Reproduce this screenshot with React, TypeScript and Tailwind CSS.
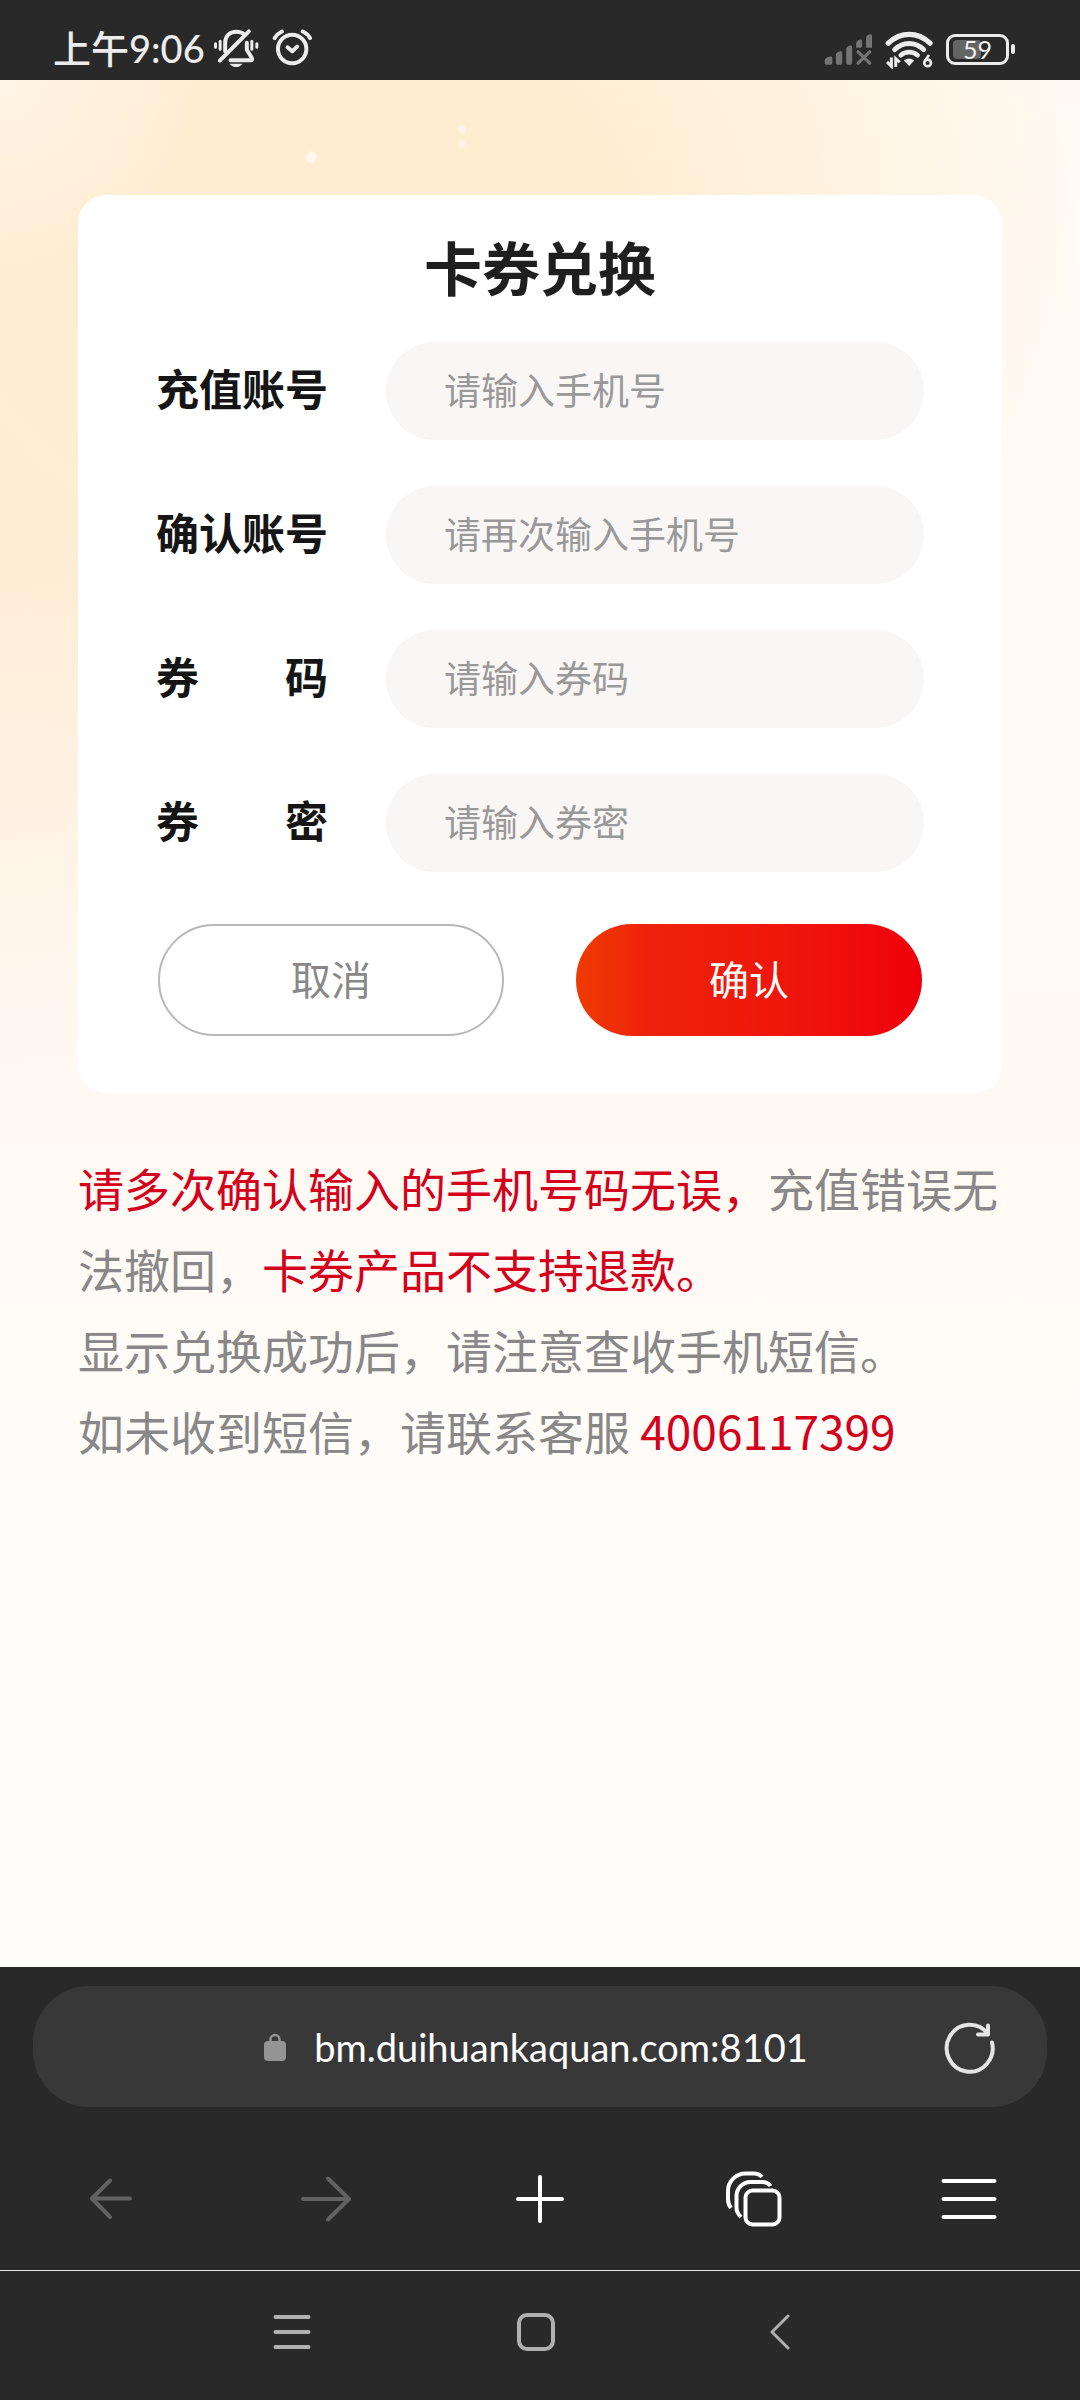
import type { ReactNode } from 'react';

const fields = [
  { id: 'account', label: '充值账号', placeholder: '请输入手机号' },
  { id: 'account-confirm', label: '确认账号', placeholder: '请再次输入手机号' },
  { id: 'code', label: '券 码', placeholder: '请输入券码' },
  { id: 'secret', label: '券 密', placeholder: '请输入券密' },
];

function BellOffIcon() {
  return (
    <svg viewBox="552 88 140 120" className="h-10 w-[47px]" fill="none" stroke="#ececec" strokeWidth="12" strokeLinecap="round" aria-label="静音">
      <path d="M588 158V132C588 112 602 99 621 99C632 99 640 102 646 108" />
      <path d="M572 186L659 98" />
      <path d="M653 132V153L668 178Q671 185 664 185H604" strokeLinejoin="round" />
      <path d="M573 128V152M668 128V152M559 135V146M683 135V146" strokeWidth="9" />
      <path d="M601 195H640Q632 205 621 205Q609 205 601 195Z" fill="#ececec" stroke="none" />
    </svg>
  );
}

function AlarmIcon() {
  return (
    <svg viewBox="729 88 124 120" className="h-10 w-[41px]" fill="none" stroke="#ececec" strokeWidth="12" strokeLinecap="round" strokeLinejoin="round" aria-label="闹钟">
      <circle cx="790" cy="151" r="43" />
      <path d="M776 146L790 158L805 144" />
      <path d="M737 118Q746 104 759 98M844 118Q836 104 822 98" />
    </svg>
  );
}

function SignalIcon() {
  return (
    <svg viewBox="100 100 148 98" className="h-[33px] w-[49px]" fill="#747474" aria-label="无信号">
      <path d="M102 190V182Q103 173 120 170Q125 169 125 175V190Q125 195 120 195H107Q102 195 102 190Z" />
      <path d="M136 190V163Q137 157 150 154Q155 153 155 159V190Q155 195 150 195H141Q136 195 136 190Z" />
      <path d="M167 190V147Q168 140 180 137Q185 136 185 142V190Q185 195 180 195H172Q167 195 167 190Z" />
      <path d="M197 144V130Q198 122 210 119Q215 118 215 124V138Q215 144 210 144Z" />
      <path d="M227 144V113Q228 106 240 103Q245 102 245 108V144Z" />
      <path d="M203 156L238 190M238 156L203 190" stroke="#747474" strokeWidth="10" strokeLinecap="round" />
    </svg>
  );
}

function WifiIcon() {
  return (
    <svg viewBox="282 92 146 116" className="h-[39px] w-[49px]" fill="none" stroke="#ececec" aria-label="无线网络">
      <path d="M292 131Q320 105 354 105Q388 105 416 131" strokeWidth="16" strokeLinecap="round" />
      <path d="M311 150Q330 132 354 132Q378 132 397 150" strokeWidth="15" strokeLinecap="round" />
      <path d="M329 167Q340 158 354 158Q368 158 379 167" strokeWidth="14" strokeLinecap="round" />
      <path d="M338 183Q354 171 369 183L354 199Z" fill="#ececec" stroke="none" />
      <path d="M301 174V200L288 187M314 202V177L326 188" strokeWidth="9" />
      <path d="M413 166L401 184" strokeWidth="8" />
      <circle cx="409" cy="190" r="10" strokeWidth="8" />
    </svg>
  );
}

function Battery() {
  return (
    <div className="flex items-center gap-0.5">
      <div className="relative flex h-[31px] w-[63px] items-center justify-center rounded-[9px] border-3 border-[#ececec] text-[25px] leading-none text-[#f2f2f2]">
        <span className="absolute inset-y-[3px] left-1 w-7 rounded-sm bg-[#646464]" />
        <span className="relative">59</span>
      </div>
      <span className="h-2.5 w-1 rounded-sm bg-[#ececec]" />
    </div>
  );
}

function ToolButton({ label, children }: { label: string; children: ReactNode }) {
  return (
    <button type="button" aria-label={label} className="flex h-full items-center justify-center">
      {children}
    </button>
  );
}

export default function App() {
  return (
    <div className="flex min-h-screen flex-col bg-[#292929] font-['Lato','Noto_Sans_CJK_SC',sans-serif]">
      <header className="flex h-20 items-center justify-between pr-[65px] pl-[53px]">
        <div className="flex items-center pt-4">
          <span className="text-[38px] leading-10 font-medium text-[#ececec]">上午9:06</span>
          <span className="ml-2 flex items-center gap-3">
            <BellOffIcon />
            <AlarmIcon />
          </span>
        </div>
        <div className="flex items-center gap-3 pt-[18px]">
          <SignalIcon />
          <WifiIcon />
          <Battery />
        </div>
      </header>

      <main className="flex-1 bg-[#fffcfa] bg-[radial-gradient(circle_at_28.8%_4.1%,#fff8ee_0,#fff8ee_4px,transparent_7px),radial-gradient(circle_at_42.8%_2.6%,#fff6ea_0,#fff6ea_2px,transparent_5px),radial-gradient(circle_at_42.8%_3.4%,#fff6ea_0,#fff6ea_2px,transparent_5px),radial-gradient(ellipse_18%_10%_at_0%_0%,#fff4e6_0%,#fff4e600_100%),radial-gradient(ellipse_65%_30%_at_35%_8%,#ffedd2_0%,#ffedd2_35%,#ffedd200_100%),radial-gradient(ellipse_60%_36%_at_0%_17%,#ffecd6_0%,#ffecd6_25%,#ffecd600_100%),linear-gradient(to_bottom,#fffaf1_0%,#fffaf4_20%,#fff9f3_55%,#fffdfb_82%,#fffdfb_100%)] px-[78px] pt-[115px] font-['Noto_Sans_CJK_SC',sans-serif]">
        <form className="rounded-[28px] bg-white px-[78px] pt-[34px] pb-[57px]">
          <h1 className="text-center text-[58px] leading-[75px] font-bold text-[#1f1f1f]">卡券兑换</h1>
          <div className="mt-[38px] flex flex-col gap-[46px]">
            {fields.map((f) => (
              <div key={f.id} className="flex items-center gap-[58px]">
                <label htmlFor={f.id} className="w-[172px] shrink-0 pb-2 text-[43px] leading-[64px] font-bold text-[#151515] [text-align-last:justify]">
                  {f.label}
                </label>
                <input
                  id={f.id}
                  type="text"
                  placeholder={f.placeholder}
                  className="h-[98px] min-w-0 flex-1 rounded-full bg-[#f8f7f6] px-[58px] pb-1 text-[37px] text-[#333] outline-none placeholder:text-[#999]"
                />
              </div>
            ))}
          </div>
          <div className="mt-[52px] grid grid-cols-2 gap-[72px] px-0.5">
            <button type="button" className="h-28 rounded-full border-2 border-[#b8b8b8] bg-white pb-1 text-[40px] text-[#888]">
              取消
            </button>
            <button type="button" className="h-28 rounded-full bg-linear-to-r from-[#f03a05] via-[#ee220a] via-20% to-[#ef000b] pb-1 text-[40px] text-white">
              确认
            </button>
          </div>
        </form>

        <section className="mt-[54px] text-[46px] leading-[81px] text-[#888]">
          <p>
            <span className="text-[#d5001c]">请多次确认输入的手机号码无误，</span>充值错误无法撤回，
            <span className="text-[#d5001c]">卡券产品不支持退款。</span>
          </p>
          <p>显示兑换成功后，请注意查收手机短信。</p>
          <p>
            如未收到短信，请联系客服 <a href="tel:4006117399" className="text-[#d5001c]">4006117399</a>
          </p>
        </section>
      </main>

      <footer>
        <div className="mx-[33px] mt-[19px] grid h-[121px] grid-cols-[48px_1fr_54px] items-center rounded-[56px] bg-[#383838] pr-[51px] pl-[49px]">
          <button type="button" className="col-start-2 flex items-center justify-center gap-7 text-[38px] leading-[48px] text-white">
            <svg viewBox="0 0 22 28" className="h-7 w-[22px]" fill="#949494" aria-hidden="true">
              <rect y="8" width="22" height="20" rx="4" />
              <path d="M6.500 10V6.500a4.500 4.500 0 0 1 9 0V10" fill="none" stroke="#949494" strokeWidth="2.500" />
            </svg>
            bm.duihuankaquan.com:8101
          </button>
          <button type="button" aria-label="刷新">
            <svg viewBox="0 0 54 54" className="size-[54px]" fill="none" stroke="#e4e4e4" strokeWidth="4" strokeLinecap="round" strokeLinejoin="round">
              <path d="M46 14A23 23.500 0 1 0 50 22.500" />
              <path d="M46 5.500V14.500H36" />
            </svg>
          </button>
        </div>

        <nav className="mt-5 grid h-[143px] grid-cols-5 px-1" aria-label="浏览器工具栏">
          <ToolButton label="后退">
            <svg viewBox="0 0 42 42" className="size-[42px]" fill="none" stroke="#626262" strokeWidth="4" strokeLinecap="round" strokeLinejoin="round">
              <path d="M40 20.500H2M20 2.500L2 20.500L20 39" />
            </svg>
          </ToolButton>
          <ToolButton label="前进">
            <svg viewBox="0 0 50 46" className="h-[46px] w-[50px]" fill="none" stroke="#626262" strokeWidth="4" strokeLinecap="round" strokeLinejoin="round">
              <path d="M2 23H48M27 2.500L48 23L27 43.500" />
            </svg>
          </ToolButton>
          <ToolButton label="新建标签页">
            <svg viewBox="0 0 50 50" className="size-[50px]" fill="none" stroke="#fff" strokeWidth="4" strokeLinecap="round">
              <path d="M3 25H47M25 3V47" />
            </svg>
          </ToolButton>
          <ToolButton label="标签页">
            <svg viewBox="0 0 56 56" className="size-14" fill="none" stroke="#fff" strokeWidth="4">
              <rect x="19.500" y="19.500" width="34" height="34" rx="7" />
              <path d="M15 46C12 43 10.500 41 10.500 37V25A14 14 0 0 1 24.500 11H36C40 11 42.500 12 44.500 15" />
              <path d="M5 37C3 34.500 2 32 2 28V20A17.500 17.500 0 0 1 19.500 2.500H28C32 2.500 34 3.500 36 6" />
            </svg>
          </ToolButton>
          <ToolButton label="菜单">
            <svg viewBox="0 0 56 42" className="h-[42px] w-14" fill="none" stroke="#fff" strokeWidth="4" strokeLinecap="round">
              <path d="M2.500 3H53.500M2.500 21H53.500M2.500 39H53.500" />
            </svg>
          </ToolButton>
        </nav>

        <nav className="grid h-[130px] grid-cols-3 border-t border-[#e6e6e6] pr-[178px] pb-[7px] pl-[170px]" aria-label="系统导航">
          <ToolButton label="最近任务">
            <svg viewBox="0 0 38 36" className="h-9 w-[38px]" fill="none" stroke="#b0b0b0" strokeWidth="4" strokeLinecap="round">
              <path d="M2.500 3H35.500M2.500 18H35.500M2.500 33H35.500" />
            </svg>
          </ToolButton>
          <ToolButton label="主屏幕">
            <span className="size-[38px] rounded-[10px] border-4 border-[#b0b0b0]" />
          </ToolButton>
          <ToolButton label="返回">
            <svg viewBox="0 0 20 36" className="h-9 w-5" fill="none" stroke="#b0b0b0" strokeWidth="3" strokeLinecap="round" strokeLinejoin="round">
              <path d="M18 2L2 18L18 34" />
            </svg>
          </ToolButton>
        </nav>
      </footer>
    </div>
  );
}
